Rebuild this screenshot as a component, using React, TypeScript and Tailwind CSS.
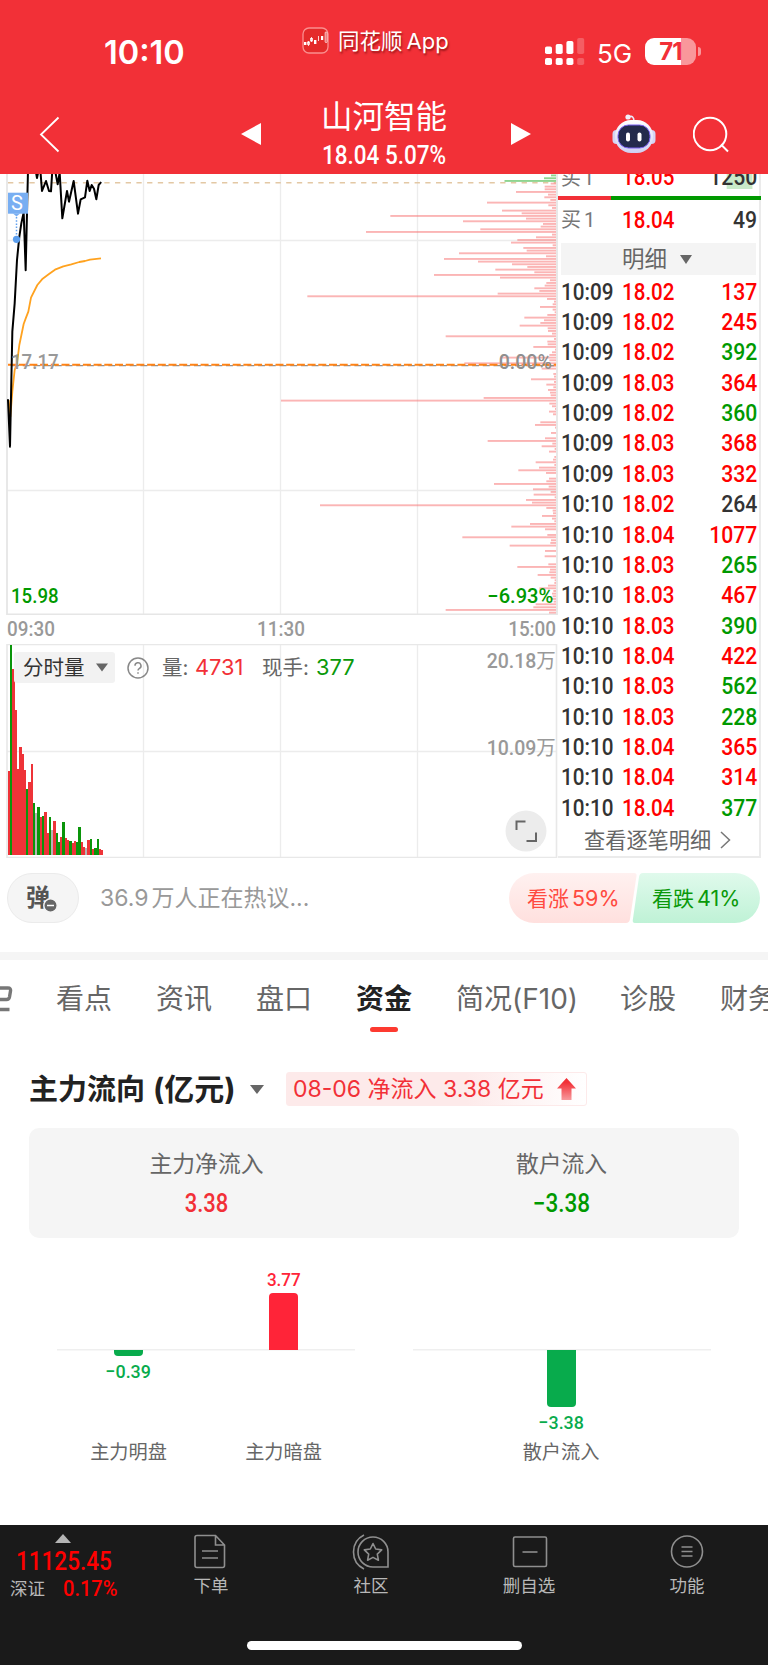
import React from "react";

const CN = "font-['Inter','Noto_Sans_CJK_SC',sans-serif]";
const DIN = "font-['Roboto','Noto_Sans_CJK_SC',sans-serif] font-medium";

/* [y, left edge] of the volume-by-price bars, right aligned at x = 556 */
const upper: [number, number][] = [
  [41,842],[50,824],[58,824],[66,738],[74,834],[82,823],[90,841],[98,651],[106,835],[114,846],[122,696],[130,755],[138,361],[146,768],[154,579],[162,819],[170,812],[178,631],[186,288],[194,846],[202,798],[210,742],[218,723],[226,848],[234,760],[242,770],[250,567],[259,828],[267,522],[275,624],[283,726],[291,772],[299,676],[307,793],[315,492],[323,690],[331,840],[339,829],[347,824],[355,793],[363,808],[371,683],[379,112],[387,831],[395,852],[403,848],[411,810],[419,848],[427,854],[435,832],[443,763],[451,822],[459,811],[467,749],[475,833],[483,834],[491,846],[499,527],[507,852],[515,832],[523,833],[531,790],[539,855],[547,846],[555,838],[563,690],[571,838],[580,583],[588,840],[596,815],[612,850],[620,852],[628,783],[636,852],[644,829],[652,850],[660,834],[668,840],[676,842],[684,641],[692,33],
];
const lower: [number, number][] = [
  [11,838],[19,846],[27,855],[35,837],[43,849],[67,811],[75,795],[83,855],[99,843],[115,825],[123,653],[131,847],[139,815],[147,854],[155,837],[171,853],[179,849],[187,797],[195,853],[203,807],[211,745],[219,828],[236,837],[244,829],[252,672],[260,836],[268,789],[276,842],[284,791],[292,854],[300,768],[308,786],[316,150],[324,829],[332,848],[340,849],[348,816],[356,846],[364,853],[372,780],[380,724],[388,825],[405,832],[412,577],[421,843],[429,841],[437,719],[453,825],[469,824],[493,835],[501,742],[509,840],[517,838],[525,803],[533,842],[541,854],[549,853],[557,834],[565,808],[573,850],[581,846],[589,848],[597,845],[605,851],[613,797],[622,790],[630,527],[638,837],
];
const profile = [
  ...upper.map(([y, x]) => [170 + y / 3 - 174, 270 + x / 3]),
  ...lower.map(([y, x]) => [400 + y / 3 - 174, 270 + x / 3]),
];
const greens = [[1.5, 551], [4.3, 544], [7, 504.5]];

const pricePts: [number, number][] = [
  [24,690],[30,830],[37,485],[44,400],[51,270],[58,200],[64,160],[71,127],[77,301],[84,0],[103,-20],[111,24],[116,0],[121,0],[126,63],[138,33],[147,63],[153,64],[157,0],[165,0],[173,43],[179,8],[187,145],[201,63],[207,95],[221,33],[234,131],[242,88],[255,82],[262,32],[269,63],[275,45],[282,56],[289,88],[296,45],[302,38],
];
const avgPts: [number, number][] = [
  [26,690],[31,740],[37,665],[44,600],[51,580],[58,525],[71,462],[78,443],[85,425],[93,383],[112,345],[128,326],[147,312],[165,299],[190,289],[214,283],[238,276],[255,273],[270,269],[303,265],
];
const toLine = (p: [number, number][]) => p.map(([x, y]) => `${x / 3},${y / 3 - 4}`).join(" ");

/* color code and bar top */
const volume: [string, number][] = [
  ["r",513],["g",135],["r",208],["r",330],["r",507],["r",441],["r",463],["r",510],["g",568],["r",546],["r",493],["g",610],["n",640],["g",622],["r",650],["g",648],["r",636],["r",698],["g",650],["n",690],["r",664],["g",700],["g",725],["r",712],["g",667],["r",713],["r",721],["g",722],["r",729],["r",722],["g",726],["g",682],["r",726],["r",741],["n",744],["r",721],["g",718],["r",746],["g",744],["g",716],["r",747],["r",751],
];
const volColor: Record<string, string> = { r: "#ee3338", g: "#0a950a", n: "#b5b5b5" };

const ticks: [string, string, string, string][] = [
  ["10:09", "18.02", "137", "r"], ["10:09", "18.02", "245", "r"], ["10:09", "18.02", "392", "g"],
  ["10:09", "18.03", "364", "r"], ["10:09", "18.02", "360", "g"], ["10:09", "18.03", "368", "r"],
  ["10:09", "18.03", "332", "r"], ["10:10", "18.02", "264", "n"], ["10:10", "18.04", "1077", "r"],
  ["10:10", "18.03", "265", "g"], ["10:10", "18.03", "467", "r"], ["10:10", "18.03", "390", "g"],
  ["10:10", "18.04", "422", "r"], ["10:10", "18.03", "562", "g"], ["10:10", "18.03", "228", "g"],
  ["10:10", "18.04", "365", "r"], ["10:10", "18.04", "314", "r"], ["10:10", "18.04", "377", "g"],
];
const tickColor: Record<string, string> = { r: "text-[#ff0000]", g: "text-[#009900]", n: "text-[#333333]" };

function Header() {
  return (
    <header className="relative z-10 h-[174px] bg-[#f23037] text-white">
      <div className="flex h-[90px] items-start">
        <div className="ml-[104px] mt-[33px] w-[198px] text-[32.500px] font-semibold leading-[40px] font-['Inter',sans-serif]">10:10</div>
        <svg className="mt-[27px]" width="27" height="27" viewBox="0 0 27 27">
          <rect x="1" y="1" width="25" height="25" rx="6" fill="#e42a2a" stroke="#fa8f8f" strokeWidth="1.3" />
          <g fill="#fff">
            <rect x="2" y="15" width="2.4" height="3" />
            <rect x="12" y="13" width="2.4" height="4" />
            <rect x="19" y="9" width="2.2" height="4" />
          </g>
          <g fill="none" stroke="#fff" strokeWidth=".8">
            <path d="M6.5 14v5M9.500 10v5M16.500 9v5" />
            <rect x="5.600" y="15" width="1.800" height="2.500" />
            <rect x="8.600" y="11.500" width="1.800" height="2.500" />
            <rect x="23.200" y="5" width="1.800" height="10.500" rx=".8" />
          </g>
        </svg>
        <div className={`ml-[9px] mt-[26px] flex w-[207px] items-center gap-[4px] whitespace-nowrap text-[21.500px] leading-[30px] [text-shadow:1px_2px_2px_rgba(80,0,0,0.55)] ${CN}`}>
          <span>同花顺</span>
          <span className="text-[22px]">App</span>
        </div>
        <svg className="mt-[38px]" width="40" height="28" viewBox="0 0 40 28">
          <g fill="#fff">
            <rect x="0" y="8.500" width="7" height="7.500" rx="1.800" />
            <rect x="10.700" y="6" width="7" height="10" rx="1.800" />
            <rect x="21.400" y="3" width="7" height="13" rx="1.800" />
            <rect x="0" y="20" width="7" height="7" rx="1.800" />
            <rect x="10.700" y="20" width="7" height="7" rx="1.800" />
            <rect x="21.400" y="20" width="7" height="7" rx="1.800" />
            <g opacity=".22">
              <rect x="32.200" y="0" width="7" height="16" rx="1.800" />
              <rect x="32.200" y="20" width="7" height="7" rx="1.800" />
            </g>
          </g>
        </svg>
        <div className="ml-[12px] mt-[38px] w-[48px] text-[26px] leading-[32px] font-['Inter',sans-serif]">5G</div>
        <div className="mt-[38px] flex items-center">
          <div className="flex h-[27px] w-[51px] items-center justify-center rounded-[9px] bg-[linear-gradient(90deg,#fff_0,#fff_36px,#f9979b_36px)] text-[24px] font-bold leading-none tracking-[-1px] text-[#f23037] font-['Inter',sans-serif]">71</div>
          <div className="ml-[2px] h-[9px] w-[3px] rounded-r-[3px] bg-[#f9979b]" />
        </div>
      </div>
      <div className="flex h-[84px] items-start">
        <svg className="ml-[38px] mt-[26px]" width="24" height="37" viewBox="0 0 24 37">
          <path d="M20.500 1.500 3 18.500l17.500 17" fill="none" stroke="#fff" strokeWidth="1.800" />
        </svg>
        <svg className="ml-[179px] mt-[33px]" width="20" height="22" viewBox="0 0 20 22"><path d="M0 11 20 0v22z" fill="#fff" /></svg>
        <div className="ml-[50px] w-[146px] text-center">
          <div className={`mt-[8px] whitespace-nowrap text-[31.500px] leading-[38px] ${CN}`}>山河智能</div>
          <div className={`mt-[6px] scale-x-[0.9] whitespace-nowrap text-[25px] leading-[27px] ${DIN}`}>18.04 5.07%</div>
        </div>
        <svg className="ml-[54px] mt-[33px]" width="20" height="22" viewBox="0 0 20 22"><path d="M0 0 20 11 0 22z" fill="#fff" /></svg>
        <svg className="ml-[81px] mt-[23px]" width="44" height="41" viewBox="0 0 44 41">
          <defs>
            <linearGradient id="bot" x1="0" y1="0" x2="0" y2="1"><stop offset="0" stopColor="#fff" /><stop offset="1" stopColor="#cfd0f2" /></linearGradient>
          </defs>
          <path d="M16 4.500c4-2.500 6-.5 6 4" fill="none" stroke="#e9e9fa" strokeWidth="1.600" />
          <circle cx="16" cy="4" r="2.600" fill="#f1f1fb" />
          <rect x="0.500" y="17" width="8" height="14" rx="4" fill="#d5d5f4" />
          <rect x="35.500" y="17" width="8" height="14" rx="4" fill="#d5d5f4" />
          <rect x="3" y="7" width="38" height="33" rx="16" fill="url(#bot)" />
          <rect x="6" y="12" width="32" height="23" rx="10.500" fill="#232a4b" stroke="#7a5ff0" strokeWidth="1" />
          <rect x="14" y="19.500" width="4" height="9" rx="2" fill="#fff" />
          <rect x="25.500" y="19.500" width="4" height="9" rx="2" fill="#fff" />
        </svg>
        <svg className="ml-[37px] mt-[25px]" width="38" height="38" viewBox="0 0 38 38">
          <circle cx="17" cy="19" r="16.300" fill="none" stroke="#fff" strokeWidth="2" />
          <path d="m28 29.500 7 7" stroke="#fff" strokeWidth="2" />
        </svg>
      </div>
    </header>
  );
}

function PriceChart() {
  return (
    <div className={`relative h-[441px] text-[20.500px] leading-[20px] ${DIN}`}>
      <svg className="block" width="558" height="441" viewBox="0 0 558 441">
        <g stroke="#ececec" strokeWidth="1.300">
          <path d="M143.500 0v441M280.500 0v441M417.500 0v441M7 66.500h550M7 316.500h550" />
          <path d="M7 0v441M557 0v441M7 440.500h550" stroke="#e6e6e6" strokeWidth="1.800" />
        </g>
        <path d="M8 8.800h548" stroke="#e3c8a4" strokeWidth="1.600" strokeDasharray="5.300 5.400" />
        <g fill="#f87878" fillOpacity=".55">
          {profile.map(([y, x], i) => <rect key={i} x={x} y={y - 1} width={556 - x} height="1.900" />)}
        </g>
        <g fill="#8fd48f">
          {greens.map(([y, x], i) => <rect key={i} x={x} y={y - 1} width={556 - x} height="1.900" />)}
        </g>
        <path d="M12 191.600h544" stroke="#8f8f8f" strokeWidth="1.300" strokeDasharray="7 3.700" />
        <path d="M8 190.700h548" stroke="#ff8316" strokeWidth="1.900" strokeDasharray="8 2.700" />
        <polyline points={toLine(avgPts)} fill="none" stroke="#ffa21f" strokeWidth="1.800" strokeLinejoin="round" />
        <polyline points={toLine(pricePts)} fill="none" stroke="#000" strokeWidth="2" strokeLinejoin="round" strokeLinecap="round" />
        <rect x="8" y="18.700" width="20" height="21" fill="#78aef2" />
        <path d="m13 39.500 3.500 3 3.500-3z" fill="#78aef2" />
        <path d="M16.500 43v18" stroke="#5fa0f0" strokeWidth="1.500" strokeDasharray="1.500 1.700" />
        <circle cx="16.500" cy="65.300" r="3.600" fill="#5b9eee" />
      </svg>
      <span className="absolute left-[11px] top-[19px] text-[20px] font-normal text-white">S</span>
      <span className="absolute left-[11px] top-[178px] origin-left scale-x-[0.91] text-[#999]">17.17</span>
      <span className="absolute right-[6px] top-[178px] origin-right scale-x-[0.95] text-[#8f8f8f]">0.00%</span>
      <span className="absolute left-[11px] top-[412px] origin-left scale-x-[0.91] text-[#009900]">15.98</span>
      <span className="absolute right-[5px] top-[412px] origin-right scale-x-[0.98] text-[#009900]">−6.93%</span>
    </div>
  );
}

function VolumeChart() {
  return (
    <div className="relative h-[214px]">
      <svg className="block" width="558" height="214" viewBox="0 0 558 214">
        <path d="M143.500 0v214M280.500 0v214M417.500 0v214M7 107.500h550" stroke="#ececec" strokeWidth="1.300" />
        <path d="M7 .5h550M7 213.500h550M7 0v214M556.500 0v214" stroke="#e8e8e8" strokeWidth="1.600" fill="none" />
        <g shapeRendering="crispEdges">
          {volume.map(([c, top], i) => (
            <rect key={i} x={7.800 + i * 2.275} y={top / 3 - 44} width="2.400" height={255 - top / 3} fill={volColor[c]} />
          ))}
        </g>
      </svg>
      <div className={`absolute left-[14px] top-[8px] flex items-center whitespace-nowrap text-[20.500px] leading-[31px] text-[#666] ${CN}`}>
        <div className="flex h-[31px] w-[101px] items-center rounded-[3px] bg-[#f2f2f2] pl-[9px] text-[#333]">
          <span>分时量</span>
          <svg className="ml-[11px]" width="12" height="9" viewBox="0 0 12 9"><path d="M0 .5h12L6 8.500z" fill="#666" /></svg>
        </div>
        <svg className="ml-[12px]" width="22" height="22" viewBox="0 0 22 22">
          <circle cx="11" cy="11" r="10" fill="none" stroke="#888" strokeWidth="1.500" />
          <path d="M8 8.800a3 3 0 1 1 4.500 2.500c-1 .6-1.500 1.100-1.500 2.300M11 15.200v1.600" fill="none" stroke="#888" strokeWidth="1.500" />
        </svg>
        <span className="ml-[13px] w-[33px]">量:</span>
        <span className="w-[67px] text-[21.800px] text-[#f23037]">4731</span>
        <span className="w-[54px]">现手:</span>
        <span className="text-[21.800px] text-[#0a990a]">377</span>
      </div>
      <span className={`absolute right-[2px] top-[7px] origin-right scale-x-[0.95] whitespace-nowrap text-[20.500px] leading-[20px] text-[#999] ${DIN}`}>20.18<span className="font-normal">万</span></span>
      <span className={`absolute right-[2px] top-[94px] origin-right scale-x-[0.95] whitespace-nowrap text-[20.500px] leading-[20px] text-[#999] ${DIN}`}>10.09<span className="font-normal">万</span></span>
      <svg className="absolute left-[505px] top-[166px]" width="42" height="42" viewBox="0 0 42 42">
        <circle cx="21" cy="21" r="20.500" fill="#ececec" />
        <path d="M11.500 20v-8.500h9M31 22.500V31h-9.500" fill="none" stroke="#666" strokeWidth="2" />
      </svg>
    </div>
  );
}

function OrderPanel() {
  const price = "origin-left scale-x-[0.895] text-[#f00]";
  const count = "ml-auto origin-right scale-x-[0.92]";
  return (
    <div className={`h-[684px] w-[203px] border-b-2 border-r-2 border-[#ebebeb] text-[23px] ${DIN}`}>
      <div className="-mt-[15px] flex h-[37px] items-center pl-[3px] pr-[2px] leading-none">
        <span className="w-[61px] whitespace-nowrap text-[20px] font-normal text-[#777]">买<span className="ml-[2px]">1</span></span>
        <span className={price}>18.05</span>
        <span className={`${count} bg-[linear-gradient(#c9eac9,#c9eac9)] bg-[length:28px_16px] bg-[position:19px_7px] bg-no-repeat text-[#333]`}>1250</span>
      </div>
      <div className="flex h-[4px]">
        <div className="w-[53px] bg-[#f23037]" />
        <div className="-mr-[2px] flex-1 bg-[#009900]" />
      </div>
      <div className="flex h-[40px] items-center pl-[3px] pr-[2px] leading-none">
        <span className="w-[61px] whitespace-nowrap text-[20px] font-normal text-[#777]">买<span className="ml-[3px]">1</span></span>
        <span className={price}>18.04</span>
        <span className={`${count} text-[#333]`}>49</span>
      </div>
      <div className={`ml-[3px] mt-[3px] flex h-[32px] w-[195px] items-center bg-[#f4f4f4] pl-[61px] text-[22.500px] font-normal text-[#666] ${CN}`}>
        <span>明细</span>
        <svg className="ml-[13px] mt-[1px]" width="12" height="9" viewBox="0 0 12 9"><path d="M0 0h12L6 9z" fill="#666" /></svg>
      </div>
      <div className="mt-[2px]">
        {ticks.map(([t, p, v, c], i) => (
          <div key={i} className="flex h-[30.370px] items-center pl-[3px] pr-[2px] leading-none">
            <span className="w-[61px] origin-left scale-x-[0.9] text-[#333]">{t}</span>
            <span className={price}>{p}</span>
            <span className={`${count} ${tickColor[c]}`}>{v}</span>
          </div>
        ))}
      </div>
      <div className={`flex h-[34px] items-center pl-[26px] text-[21.200px] font-normal text-[#666] ${CN}`}>
        <span className="whitespace-nowrap">查看逐笔明细</span>
        <svg className="ml-[9px]" width="11" height="18" viewBox="0 0 11 18"><path d="m1 1 8.500 8L1 17" fill="none" stroke="#777" strokeWidth="1.500" /></svg>
      </div>
    </div>
  );
}

function Discussion() {
  return (
    <div className={`flex h-[94px] items-start pl-[7px] pt-[15px] ${CN}`}>
      <div className="relative flex h-[50px] w-[72px] items-center rounded-full border border-[#ebebeb] bg-[#f5f5f5] pl-[18px]">
        <span className="text-[24px] font-bold leading-none text-[#555]">弹</span>
        <svg className="absolute left-[35px] top-[24px]" width="15" height="15" viewBox="0 0 15 15">
          <circle cx="7.500" cy="7.500" r="6.700" fill="#666" stroke="#f5f5f5" strokeWidth="1.400" />
          <path d="M4 7.500h7" stroke="#fff" strokeWidth="1.500" />
        </svg>
      </div>
      <div className="ml-[21px] w-[409px] whitespace-nowrap text-[23px] leading-[50px] text-[#999]">36.9<span className="ml-[3px]">万人正在热议...</span></div>
      <div className="relative h-[50px] w-[251px]">
        <svg className="block" width="251" height="50" viewBox="0 0 251 50">
          <defs>
            <linearGradient id="up" x1="0" y1="0" x2="0" y2="1"><stop offset="0" stopColor="#fff1f0" /><stop offset="1" stopColor="#ffe0de" /></linearGradient>
            <linearGradient id="dn" x1="0" y1="0" x2="0" y2="1"><stop offset="0" stopColor="#e0faec" /><stop offset="1" stopColor="#bff2d6" /></linearGradient>
          </defs>
          <path d="M25 0H125q3 0 2.500 3L121 46q-.6 4-4 4H25A25 25 0 0 1 25 0z" fill="url(#up)" />
          <path d="M134 0H226a25 25 0 0 1 0 50H126q-2.700 0-2.200-3L130 4q.6-4 4-4z" fill="url(#dn)" />
        </svg>
        <span className="absolute left-[18px] top-0 whitespace-nowrap text-[21px] leading-[50px] text-[#ff4a40]">看涨<span className="ml-[3px] text-[21.500px]">59%</span></span>
        <span className="absolute left-[143px] top-0 whitespace-nowrap text-[21px] leading-[50px] text-[#0a990a]">看跌<span className="ml-[3px] text-[21.500px]">41%</span></span>
      </div>
    </div>
  );
}

function Tabs() {
  const item = "shrink-0 whitespace-nowrap leading-[40px]";
  return (
    <nav className={`flex h-[88px] items-start overflow-hidden border-t-[8px] border-[#f5f5f5] pt-[19px] text-[28px] text-[#666] ${CN}`}>
      <svg className="mt-[7px] shrink-0" width="13" height="26" viewBox="0 0 13 26"><path d="M0 2h8q3 0 2.500 3l-1 6q-.5 2.500-3 2.500H-3M0 23.500h9.500" fill="none" stroke="#777" strokeWidth="3.400" /></svg>
      <span className={`${item} ml-[43px] w-[100px]`}>看点</span>
      <span className={`${item} w-[100px]`}>资讯</span>
      <span className={`${item} w-[100px]`}>盘口</span>
      <span className={`${item} flex w-[100px] flex-col font-bold text-[#222]`}>
        资金
        <i className="ml-[14px] mt-[8px] h-[5px] w-[28px] rounded-full bg-[#fd3a30]" />
      </span>
      <span className={`${item} w-[164px]`}>简况(F10)</span>
      <span className={`${item} w-[100px]`}>诊股</span>
      <span className={item}>财务</span>
    </nav>
  );
}

function Bar({ value, label, up, size }: { value: string; label: string; up?: boolean; size: string }) {
  return (
    <div className="flex flex-1 flex-col items-center">
      <div className="flex h-[78px] flex-col items-center justify-end">
        {up && <span className={`mb-[2px] shrink-0 scale-x-[0.9] text-[19px] leading-[22px] text-[#ff2438] ${DIN}`}>{value}</span>}
        {up && <div className={`w-[29px] shrink-0 rounded-t-[4px] bg-[#ff2438] ${size}`} />}
      </div>
      <div className="flex h-[90px] flex-col items-center">
        {!up && <div className={`w-[29px] shrink-0 rounded-b-[4px] bg-[#08ab4c] ${size}`} />}
        {!up && <span className={`mt-[5px] scale-x-[0.94] text-[19px] leading-[22px] text-[#08ab4c] ${DIN}`}>{value}</span>}
      </div>
      <span className="whitespace-nowrap text-[19.200px] leading-[24px] text-[#666]">{label}</span>
    </div>
  );
}

function Funds() {
  return (
    <section className={`h-[485px] ${CN}`}>
      <div className="flex h-[87px] items-center pl-[29px] pt-[11px]">
        <h2 className="w-[221px] whitespace-nowrap text-[29px] font-bold leading-[40px] text-[#222]">主力流向<span className="ml-[8px] text-[30px]">(亿元)</span></h2>
        <svg width="14" height="9" viewBox="0 0 14 9"><path d="M0 0h14L7 9z" fill="#666" /></svg>
        <div className="ml-[22px] flex h-[34px] w-[301px] items-center rounded-[3px] border border-[#fdeaea] bg-[linear-gradient(90deg,#fdeaea_60%,#fff)] pl-[6px] text-[23px] leading-[32px] text-[#f23037]">
          <span className="whitespace-nowrap">08-06 净流入 3.38 亿元</span>
          <svg className="ml-[13px]" width="19" height="22" viewBox="0 0 19 22">
            <defs><linearGradient id="ar" x1="0" y1="0" x2="0" y2="1"><stop offset="0.200" stopColor="#f23037" /><stop offset="1" stopColor="#f79a9d" /></linearGradient></defs>
            <path d="M9.500 0 19 10.500h-4.500V22h-10V10.500H0z" fill="url(#ar)" />
          </svg>
        </div>
      </div>
      <div className="mx-[29px] mt-px flex h-[110px] rounded-[10px] bg-[#f5f5f5] text-center">
        <div className="flex-1 pt-[20px]">
          <div className="text-[22.800px] leading-[32px] text-[#666]">主力净流入</div>
          <div className={`mt-[11px] scale-x-[0.88] text-[25px] leading-[26px] text-[#f23037] ${DIN}`}>3.38</div>
        </div>
        <div className="flex-1 pt-[20px]">
          <div className="text-[22.800px] leading-[32px] text-[#666]">散户流入</div>
          <div className={`mt-[11px] scale-x-[0.9] text-[25px] leading-[26px] text-[#009900] ${DIN}`}>−3.38</div>
        </div>
      </div>
      <div className="flex justify-between px-[57px] pt-[34px]">
        <div className="flex w-[298px] bg-[linear-gradient(#efefef,#efefef)] bg-[length:100%_1.500px] bg-[position:0_77px] bg-no-repeat">
          <div className="-ml-[3px] flex w-[149px] shrink-0"><Bar value="−0.39" label="主力明盘" size="h-[6px]" /></div>
          <div className="-mr-[10px] ml-[6px] flex w-[149px] shrink-0"><Bar value="3.77" label="主力暗盘" up size="h-[57px]" /></div>
        </div>
        <div className="flex w-[298px] bg-[linear-gradient(#efefef,#efefef)] bg-[length:100%_1.500px] bg-[position:0_77px] bg-no-repeat">
          <div className="-ml-[1px] flex w-[298px]"><Bar value="−3.38" label="散户流入" size="h-[57px]" /></div>
        </div>
      </div>
    </section>
  );
}

function BottomBar() {
  const label = "whitespace-nowrap text-[17.500px] leading-[24px]";
  return (
    <footer className={`flex h-[140px] flex-col bg-[#1a1a1a] text-[#b8b8b8] ${CN}`}>
      <div className="flex h-[116px] items-start">
        <div className="flex w-[132px] flex-col pt-[9px]">
          <svg className="ml-[55px]" width="16" height="9" viewBox="0 0 16 9"><path d="M0 9 8 0l8 9z" fill="#b4b4b4" /></svg>
          <div className={`ml-[16px] mt-[5px] origin-left scale-x-[0.9] text-[25px] leading-[27px] text-[#f00] ${DIN}`}>11125.45</div>
          <div className="ml-[10px] mt-px flex items-center leading-[26px]">
            <span className="w-[53px] text-[17.500px]">深证</span>
            <span className={`origin-left scale-x-[0.91] text-[22px] text-[#f00] ${DIN}`}>0.17%</span>
          </div>
        </div>
        <div className="flex w-[158px] flex-col items-center pt-[9px]">
          <svg className="-ml-[3px]" width="32" height="36" viewBox="0 0 32 36" fill="none" stroke="#8f8f8f" strokeWidth="1.600">
            <path d="M3 1.500h18.500L30.500 11v20.500q0 2-2 2H3q-2 0-2-2V3.500q0-2 2-2zM21.500 1.500V11h9M8 17h16M8 24h16" />
          </svg>
          <span className={`${label} mt-[4px]`}>下单</span>
        </div>
        <div className="flex w-[162px] flex-col items-center pt-[9px]">
          <svg width="38" height="36" viewBox="0 0 38 36" fill="none" stroke="#8f8f8f" strokeWidth="1.600">
            <path d="M12 1C-2 8-2 28 12 35" />
            <path d="M21 3a15 15 0 1 0 0 30H36V18A15 15 0 0 0 21 3z" />
            <path d="m21 9.500 2.700 5.500 6 .9-4.400 4.200 1.100 6.100-5.400-2.800-5.400 2.800 1.100-6.100-4.400-4.200 6-.9z" strokeLinejoin="round" />
          </svg>
          <span className={`${label} mt-[4px]`}>社区</span>
        </div>
        <div className="flex w-[154px] flex-col items-center pt-[9px]">
          <svg className="ml-[2px]" width="36" height="36" viewBox="0 0 36 36" fill="none" stroke="#8f8f8f" strokeWidth="1.600">
            <rect x="1.500" y="3" width="33" height="29.500" rx="1.500" />
            <path d="M10.500 18h15" />
          </svg>
          <span className={`${label} mt-[4px]`}>删自选</span>
        </div>
        <div className="flex w-[162px] flex-col items-center pt-[9px]">
          <svg width="34" height="36" viewBox="0 0 34 36" fill="none" stroke="#8f8f8f" strokeWidth="1.600">
            <circle cx="17" cy="17.500" r="15.500" />
            <path d="M11.500 13h11M11.500 17.500h11M11.500 22h11" />
          </svg>
          <span className={`${label} mt-[4px]`}>功能</span>
        </div>
      </div>
      <div className="mx-auto h-[9px] w-[275px] rounded-full bg-white" />
    </footer>
  );
}

export default function App() {
  return (
    <div className="h-[1665px] w-[768px] overflow-hidden bg-white">
      <Header />
      <div className="flex h-[684px]">
        <div className="w-[558px]">
          <PriceChart />
          <div className={`flex h-[29px] items-center justify-between pl-[7px] pr-[2px] text-[20.500px] leading-none text-[#999] ${DIN}`}>
            <span className="origin-left scale-x-[0.92]">09:30</span>
            <span className="scale-x-[0.92]">11:30</span>
            <span className="origin-right scale-x-[0.92]">15:00</span>
          </div>
          <VolumeChart />
        </div>
        <OrderPanel />
      </div>
      <Discussion />
      <Tabs />
      <Funds />
      <BottomBar />
    </div>
  );
}
